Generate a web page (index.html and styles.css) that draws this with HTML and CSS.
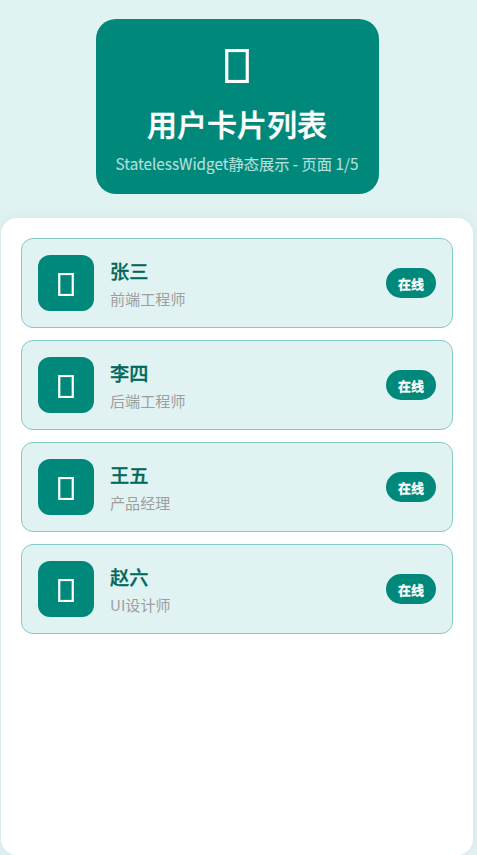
FILE: index.html
```html
<!DOCTYPE html>
<html lang="zh-CN">
<head>
<meta charset="utf-8">
<title>用户卡片列表</title>
<link rel="stylesheet" href="styles.css">
</head>
<body>
<header class="hero">
  <svg class="hero-icon" viewBox="0 0 24 34"><rect x="1.75" y="1.5" width="20.5" height="31"/></svg>
  <h1>用户卡片列表</h1>
  <p>StatelessWidget静态展示 - 页面 1/5</p>
</header>
<main class="panel">
  <article class="card">
    <div class="avatar"><svg viewBox="0 0 16 23"><rect x="1.25" y="1" width="13.5" height="21"/></svg></div>
    <div class="info"><h2>张三</h2><p>前端工程师</p></div>
    <span class="status">在线</span>
  </article>
  <article class="card">
    <div class="avatar"><svg viewBox="0 0 16 23"><rect x="1.25" y="1" width="13.5" height="21"/></svg></div>
    <div class="info"><h2>李四</h2><p>后端工程师</p></div>
    <span class="status">在线</span>
  </article>
  <article class="card">
    <div class="avatar"><svg viewBox="0 0 16 23"><rect x="1.25" y="1" width="13.5" height="21"/></svg></div>
    <div class="info"><h2>王五</h2><p>产品经理</p></div>
    <span class="status">在线</span>
  </article>
  <article class="card">
    <div class="avatar"><svg viewBox="0 0 16 23"><rect x="1.25" y="1" width="13.5" height="21"/></svg></div>
    <div class="info"><h2>赵六</h2><p>UI设计师</p></div>
    <span class="status">在线</span>
  </article>
</main>
</body>
</html>
```
FILE: styles.css
```css
* { box-sizing: border-box; margin: 0; }
body {
  height: 855px;
  padding: 19px 4px 0 1px;
  display: flex;
  flex-direction: column;
  align-items: center;
  gap: 24px;
  overflow: hidden;
  background: #e0f2f1;
  font-family: "Noto Sans CJK SC", sans-serif;
}
.hero {
  width: 283px;
  height: 175px;
  padding-top: 30px;
  display: flex;
  flex-direction: column;
  align-items: center;
  flex-shrink: 0;
  border-radius: 20px;
  background: #00897b;
  color: #fff;
}
.hero-icon { width: 24px; height: 34px; fill: none; stroke: #fff; stroke-width: 3.2; }
h1 { margin-top: 17px; font-size: 30px; line-height: 46px; font-weight: 500; white-space: nowrap; -webkit-text-stroke: .4px currentColor; }
.hero p { margin-top: 6px; font-size: 15.25px; line-height: 22px; color: #b2dfdb; white-space: nowrap; -webkit-text-stroke: .15px currentColor; }
.panel {
  width: 472px;
  height: 637px;
  padding: 20px;
  display: flex;
  flex-direction: column;
  gap: 12px;
  flex-shrink: 0;
  border-radius: 16px;
  background: #fff;
  box-shadow: 0 0 20px rgba(0, 0, 0, .05);
}
.card {
  height: 90px;
  padding: 0 16px;
  display: flex;
  align-items: center;
  gap: 16px;
  border: 1px solid #80cbc4;
  border-radius: 12px;
  background: #e0f2f1;
}
.avatar {
  width: 56px;
  height: 56px;
  padding-top: 3px;
  display: flex;
  align-items: center;
  justify-content: center;
  border-radius: 12px;
  background: #00897b;
}
.avatar svg { width: 16px; height: 23px; fill: none; stroke: #fff; stroke-width: 2.2; }
.info { flex: 1; }
h2 { padding-top: 1px; font-size: 19.2px; line-height: 28px; font-weight: 500; color: #00695c; -webkit-text-stroke: .3px currentColor; }
.info p { margin: 2px 0 1px; font-size: 15.1px; line-height: 22px; color: #9e9e9e; }
.status {
  width: 50px;
  height: 30px;
  padding-top: 1px;
  border-radius: 15px;
  background: #00897b;
  color: #fff;
  font-size: 13px;
  line-height: 30px;
  font-weight: 700;
  text-align: center;
  -webkit-text-stroke: .3px currentColor;
}
```
